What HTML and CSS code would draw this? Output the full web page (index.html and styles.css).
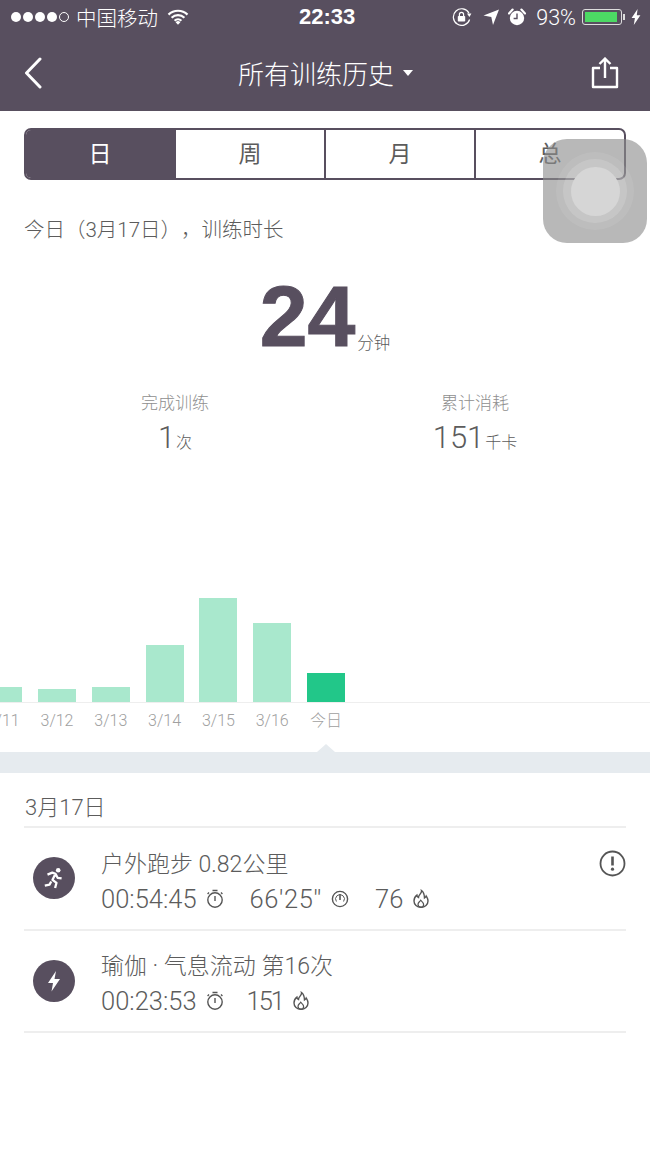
FILE: index.html
```html
<!DOCTYPE html>
<html lang="zh-CN">
<head>
    <meta charset="UTF-8">
    <meta name="viewport" content="width=device-width, initial-scale=1.0">
    <title>所有训练历史</title>
    <link rel="stylesheet" href="styles.css">
</head>
<body>
    <header class="top">
        <div class="status">
            <div class="status-left">
                <div class="signal"><i></i><i></i><i></i><i></i><i class="off"></i></div>
                <span>中国移动</span>
                <svg class="wifi" width="22" height="16" viewBox="0 0 22 16"><path d="M1.5 5.6a13.6 13.6 0 0 1 19 0M4.6 8.8a9.2 9.2 0 0 1 12.8 0M7.6 11.8a4.9 4.9 0 0 1 6.8 0" fill="none" stroke="#fff" stroke-width="2.2"/><path d="M11 15.8l-2.400-2.600a3.400 3.400 0 0 1 4.800 0z" fill="#fff"/></svg>
            </div>
            <div class="status-time">22:33</div>
            <div class="status-right">
                <svg width="20" height="18" viewBox="0 0 20 18"><path d="M17.6 11.5A8.3 8.3 0 1 1 17 5.2" fill="none" stroke="#fff" stroke-width="1.2"/><path d="M15 5.6h4.4L17.4 9z" fill="#fff"/><rect x="5.8" y="8" width="7.4" height="5.6" rx=".8" fill="#fff"/><path d="M7.4 8V6.4a2.1 2.1 0 0 1 4.2 0V8" fill="none" stroke="#fff" stroke-width="1.2"/></svg>
                <svg class="gap-arrow" width="16" height="16" viewBox="0 0 16 16"><path d="M16 .5L10 16 8.3 7.9 .5 6.5z" fill="#fff"/></svg>
                <svg class="gap-alarm" width="18" height="18" viewBox="0 0 18 18"><circle cx="9" cy="10" r="7.2" fill="#fff"/><path d="M1 5.4L4.6 1.6M17 5.4L13.4 1.6" stroke="#fff" stroke-width="2.2" stroke-linecap="round"/><path d="M9 5.5V10.5H5.6" fill="none" stroke="#584f5f" stroke-width="1.4"/></svg>
                <span class="percent">93%</span>
                <div class="battery"><div class="battery-fill"></div></div>
                <div class="battery-nub"></div>
                <svg class="bolt" width="10" height="16" viewBox="0 0 10 16"><path d="M6.6 0L.6 9h3.3L2.8 16 9.4 6.2H5.8z" fill="#fff"/></svg>
            </div>
        </div>
        <nav class="nav">
            <svg width="20" height="32" viewBox="0 0 20 32"><path d="M17 2L3.5 16 17 30" fill="none" stroke="#fff" stroke-width="3" stroke-linecap="round" stroke-linejoin="round"/></svg>
            <h1 class="nav-title">所有训练历史<span class="caret"></span></h1>
            <svg width="28" height="32" viewBox="0 0 28 32"><path d="M9 11H2v19h24V11h-7" fill="none" stroke="#fff" stroke-width="2.4" stroke-linejoin="round"/><path d="M14 21V2M8.5 7L14 1.6 19.5 7" fill="none" stroke="#fff" stroke-width="2.4"/></svg>
        </nav>
    </header>

    <main>
        <div class="tabs">
            <div class="tab active">日</div>
            <div class="tab">周</div>
            <div class="tab">月</div>
            <div class="tab">总</div>
        </div>

        <p class="today">今日（3月17日），训练时长</p>

        <div class="total"><b>24</b><span>分钟</span></div>

        <div class="stats">
            <div class="stat">
                <div class="stat-label">完成训练</div>
                <div class="stat-value">1<span>次</span></div>
            </div>
            <div class="stat">
                <div class="stat-label">累计消耗</div>
                <div class="stat-value">151<span>千卡</span></div>
            </div>
        </div>

        <div class="chart">
            <div class="col"><div class="bar" style="height:15px"></div></div>
            <div class="col"><div class="bar" style="height:13px"></div></div>
            <div class="col"><div class="bar" style="height:15px"></div></div>
            <div class="col"><div class="bar" style="height:57px"></div></div>
            <div class="col"><div class="bar" style="height:104px"></div></div>
            <div class="col"><div class="bar" style="height:79px"></div></div>
            <div class="col"><div class="bar now" style="height:29px"></div></div>
        </div>
        <div class="chart-labels">
            <div class="col">3/11</div>
            <div class="col">3/12</div>
            <div class="col">3/13</div>
            <div class="col">3/14</div>
            <div class="col">3/15</div>
            <div class="col">3/16</div>
            <div class="col">今日</div>
        </div>

        <div class="band"><span class="notch"></span></div>

        <section class="history">
            <h2 class="history-date">3月17日</h2>

            <div class="item">
                <div class="item-icon">
                    <svg width="24" height="24" viewBox="0 0 24 24"><circle cx="16.2" cy="4.2" r="2.3" fill="#fff"/><path d="M5.5 8.6l4.8-2 3.2 1.2-3 6 4 3-1.4 5.2M13.8 8.4l1.8 3.4 4 .6M9.2 15.4L7.6 18.6 2.8 19.6" fill="none" stroke="#fff" stroke-width="2.3" stroke-linejoin="round"/></svg>
                </div>
                <div class="item-body">
                    <div class="item-title">户外跑步 0.82公里</div>
                    <div class="metrics">
                        <span class="metric">00:54:45
                            <svg width="18" height="20" viewBox="0 0 18 20"><circle cx="9" cy="11" r="7.2" fill="none" stroke="#555" stroke-width="1.4"/><path d="M9 7v5M6.5 1.5h5M3 3.6L1.6 5M15 3.6L16.4 5" stroke="#555" stroke-width="1.4" fill="none"/></svg>
                        </span>
                        <span class="metric pace">66'25''
                            <svg width="18" height="18" viewBox="0 0 18 18"><circle cx="9" cy="9" r="7.6" fill="none" stroke="#555" stroke-width="1.4"/><path d="M5.400 11.500a4.400 4.400 0 1 1 7.200 0" fill="none" stroke="#555" stroke-width="1"/><path d="M9 5v5" stroke="#555" stroke-width="1.6"/></svg>
                        </span>
                        <span class="metric">76
                            <svg width="18" height="20" viewBox="0 0 18 20"><path d="M9.500 1.500c.6 3-3 4-3 7-1-.4-1.500-1.400-1.600-2.400C3 7.600 2 9.800 2 12c0 3.600 3 6.400 7 6.400s7-2.800 7-6.400c0-2.400-1-3.600-1.800-5-.4 1-1 1.600-1.700 2C12.400 6 11.600 3 9.500 1.500z" fill="none" stroke="#555" stroke-width="1.4"/><path d="M9 18.200c-2 0-3-1.400-3-3 0-1.400 1.600-2.400 2.600-4 1.400 1.400 3 2.600 3 4.200 0 1.600-1 2.800-2.600 2.800z" fill="none" stroke="#555" stroke-width="1.2"/></svg>
                        </span>
                    </div>
                </div>
                <svg class="item-alert" width="27" height="27" viewBox="0 0 27 27"><circle cx="13.5" cy="13.5" r="12" fill="none" stroke="#555" stroke-width="1.8"/><path d="M13.500 6.500v9" stroke="#555" stroke-width="2.600"/><circle cx="13.500" cy="19.200" r="1.600" fill="#555"/></svg>
            </div>

            <div class="item">
                <div class="item-icon">
                    <svg width="16" height="24" viewBox="0 0 16 24"><path d="M10 2L2 14h5l-1.500 8.500L14 10H8.500z" fill="#fff"/></svg>
                </div>
                <div class="item-body">
                    <div class="item-title">瑜伽 · 气息流动 第16次</div>
                    <div class="metrics">
                        <span class="metric">00:23:53
                            <svg width="18" height="20" viewBox="0 0 18 20"><circle cx="9" cy="11" r="7.2" fill="none" stroke="#555" stroke-width="1.4"/><path d="M9 7v5M6.5 1.5h5M3 3.6L1.6 5M15 3.6L16.4 5" stroke="#555" stroke-width="1.4" fill="none"/></svg>
                        </span>
                        <span class="metric tight">151
                            <svg width="18" height="20" viewBox="0 0 18 20"><path d="M9.500 1.500c.6 3-3 4-3 7-1-.4-1.500-1.400-1.600-2.400C3 7.600 2 9.800 2 12c0 3.600 3 6.400 7 6.400s7-2.800 7-6.400c0-2.400-1-3.600-1.800-5-.4 1-1 1.600-1.700 2C12.400 6 11.600 3 9.500 1.500z" fill="none" stroke="#555" stroke-width="1.4"/><path d="M9 18.200c-2 0-3-1.400-3-3 0-1.400 1.600-2.400 2.600-4 1.400 1.400 3 2.600 3 4.200 0 1.600-1 2.800-2.600 2.800z" fill="none" stroke="#555" stroke-width="1.2"/></svg>
                        </span>
                    </div>
                </div>
            </div>
        </section>
    </main>

    <div class="touch"><div class="touch-ring3"><div class="touch-ring2"><div class="touch-ring1"></div></div></div></div>
</body>
</html>
```

FILE: styles.css
```css
* {
    box-sizing: border-box;
}
html, body {
    margin: 0;
    padding: 0;
}
body {
    position: relative;
    width: 650px;
    height: 1156px;
    overflow: hidden;
    background-color: #fff;
    color: #5c5c5c;
    font-family: Roboto, "Noto Sans CJK SC", sans-serif;
    font-weight: 300;
    text-spacing-trim: space-all;
}

/* header */
.top {
    height: 111px;
    background-color: #584f5f;
    color: #fff;
}
.status {
    position: relative;
    display: flex;
    justify-content: space-between;
    align-items: center;
    height: 34px;
    padding: 0 9px 0 11px;
    font-size: 20.500px;
}
.status-left, .status-right {
    display: flex;
    align-items: center;
}
.signal {
    display: flex;
    gap: 2px;
    margin-right: 7px;
}
.signal i {
    width: 10px;
    height: 10px;
    border-radius: 50%;
    background-color: #fff;
}
.signal i.off {
    background: none;
    border: 1px solid #fff;
}
.wifi {
    margin-left: 9px;
}
.status-time {
    position: absolute;
    left: 299px;
    font-family: "Liberation Sans", sans-serif;
    font-size: 22px;
    font-weight: bold;
}
.gap-arrow {
    margin-left: 11px;
}
.gap-alarm {
    margin-left: 9px;
}
.percent {
    margin-left: 10px;
    font-size: 21.500px;
}
.battery {
    width: 40px;
    height: 16px;
    margin-left: 6px;
    padding: 2px;
    border: 1px solid #ddd;
    border-radius: 3px;
}
.battery-fill {
    width: 93%;
    height: 100%;
    background-color: #4cd964;
}
.battery-nub {
    width: 2px;
    height: 6px;
    margin-left: 1px;
    background-color: #ddd;
}
.bolt {
    margin-left: 6px;
}
.nav {
    display: flex;
    justify-content: space-between;
    align-items: center;
    height: 77px;
    padding: 0 31px 0 23px;
}
.nav-title {
    display: flex;
    align-items: center;
    margin: 0 0 0 17px;
    font-size: 26px;
    font-weight: 300;
}
.caret {
    width: 0;
    height: 0;
    margin-left: 9px;
    border-style: solid;
    border-width: 6px 5.500px 0;
    border-color: #fff transparent transparent;
}

/* tabs */
.tabs {
    display: flex;
    height: 52px;
    margin: 17px 24px 0;
    border: 2px solid #584f5f;
    border-radius: 7px;
    overflow: hidden;
}
.tab {
    flex: 1;
    border-right: 2px solid #584f5f;
    font-size: 23px;
    font-weight: 400;
    line-height: 50px;
    text-align: center;
}
.tab:last-child {
    border-right: none;
}
.tab.active {
    background-color: #584f5f;
    color: #fff;
}

/* summary */
.today {
    margin: 36px 0 0 24px;
    font-size: 20.500px;
    line-height: 28px;
}
.total {
    height: 92px;
    margin-top: 26px;
    color: #584f5f;
    font-family: "Liberation Sans", sans-serif;
    line-height: 92px;
    text-align: center;
}
.total b {
    font-size: 86px;
    font-weight: bold;
    -webkit-text-stroke: 1px #584f5f;
}
.total span {
    margin-left: 2px;
    color: #5c5c5c;
    font-family: "Noto Sans CJK SC", sans-serif;
    font-size: 16.500px;
    vertical-align: -3px;
}
.stats {
    display: grid;
    grid-template-columns: 1fr 1fr;
    margin-top: 29px;
    padding: 0 25px;
    text-align: center;
}
.stat-label {
    color: #8f8f8f;
    font-size: 17px;
    line-height: 24px;
}
.stat-value {
    margin-top: 5px;
    font-size: 31px;
    line-height: 36px;
}
.stat-value span {
    margin-left: 1px;
    font-size: 16px;
}

/* chart */
.chart, .chart-labels {
    display: flex;
    gap: 15.800px;
    margin-left: -15.800px;
}
.chart {
    align-items: flex-end;
    width: 666px;
    height: 120px;
    margin-top: 122px;
    border-bottom: 1px solid #eee;
}
.col {
    flex: none;
    width: 38px;
}
.bar {
    background-color: #a9e8cd;
}
.bar.now {
    background-color: #22c789;
}
.chart-labels {
    height: 49px;
    color: #a0a0a0;
    font-size: 16px;
    line-height: 35px;
    white-space: nowrap;
}
.chart-labels .col {
    display: flex;
    justify-content: center;
}
.band {
    position: relative;
    height: 21px;
    background-color: #e6ebef;
}
.notch {
    position: absolute;
    left: 317px;
    top: -8px;
    border-style: solid;
    border-width: 0 9px 8px;
    border-color: transparent transparent #e6ebef;
}

/* history list */
.history {
    padding: 0 24px;
}
.history-date {
    height: 55px;
    margin: 0;
    padding-left: 1px;
    border-bottom: 2px solid #eee;
    font-size: 22px;
    font-weight: 300;
    line-height: 70px;
}
.item {
    position: relative;
    display: flex;
    align-items: center;
    height: 102.500px;
    padding: 0 0 0 9px;
    border-bottom: 2px solid #eee;
}
.item-icon {
    display: flex;
    flex: none;
    justify-content: center;
    align-items: center;
    width: 42px;
    height: 42px;
    margin-right: 26px;
    border-radius: 50%;
    background-color: #584f5f;
}
.item-body {
    padding-top: 7px;
}
.item-title {
    font-size: 23px;
    line-height: 32px;
}
.metrics {
    display: flex;
    gap: 26px;
    margin-top: 2px;
    font-size: 25.500px;
    line-height: 32px;
}
.metric {
    display: flex;
    align-items: center;
    gap: 9px;
}
.pace {
    letter-spacing: .6px;
}
.tight {
    margin-left: -3px;
    letter-spacing: -2px;
}
.item-alert {
    position: absolute;
    right: 0;
    top: 22px;
}

/* floating assistive touch */
.touch {
    position: absolute;
    left: 543px;
    top: 139px;
    display: flex;
    justify-content: center;
    align-items: center;
    width: 104px;
    height: 104px;
    border-radius: 24px;
    background-color: rgba(140, 140, 140, .62);
}
.touch-ring3 {
    display: flex;
    justify-content: center;
    align-items: center;
    width: 78px;
    height: 78px;
    border-radius: 50%;
    background-color: rgba(255, 255, 255, .08);
}
.touch-ring2 {
    display: flex;
    justify-content: center;
    align-items: center;
    width: 64px;
    height: 64px;
    border-radius: 50%;
    background-color: rgba(255, 255, 255, .15);
}
.touch-ring1 {
    width: 49px;
    height: 49px;
    border-radius: 50%;
    background-color: #d6d6d6;
}
```
